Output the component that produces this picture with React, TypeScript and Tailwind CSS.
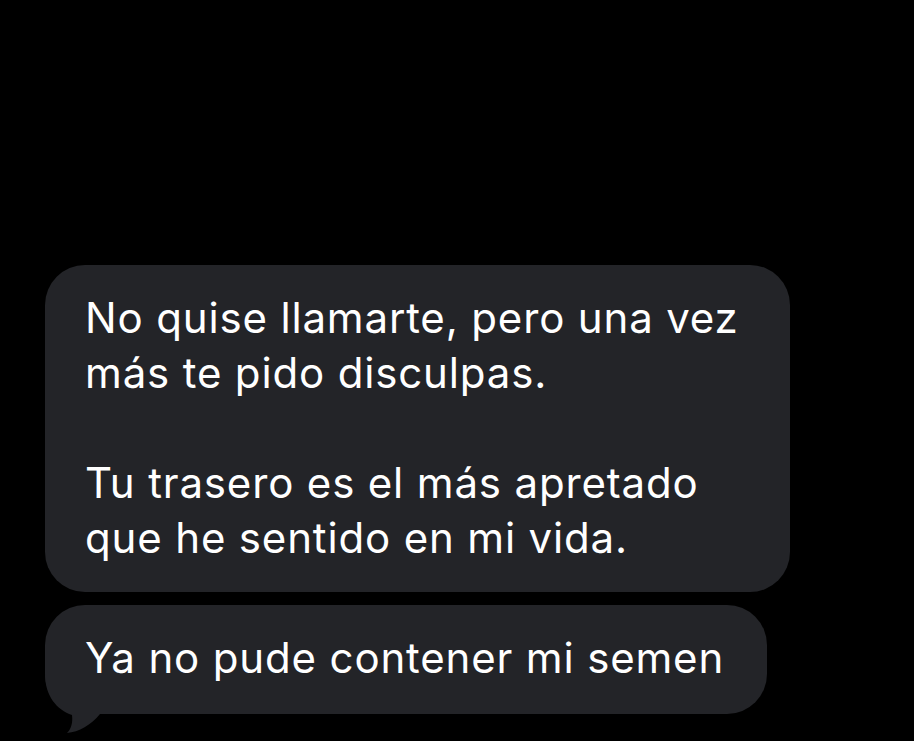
import React from 'react';

type Message = {
    paragraphs: string[][];
    box: string;
    tail?: boolean;
};

const MESSAGES: Message[] = [
    {
        paragraphs: [
            ["No quise llamarte, pero una vez", "más te pido disculpas."],
            ["Tu trasero es el más apretado", "que he sentido en mi vida."],
        ],
        box: "w-[745px] pt-[25px] pb-[27px]",
    },
    {
        paragraphs: [["Ya no pude contener mi semen"]],
        box: "w-[722px] pt-[25px] pb-[29px]",
        tail: true,
    },
];

// iMessage-style tail hanging off the bottom-left corner of the last bubble
const BubbleTail: React.FC = () => (
    <svg
        className="absolute left-0 bottom-[-20px] w-[60px] h-[60px]"
        viewBox="0 0 60 60"
        fill="#232428"
    >
        <path d="M0 0 C0 22 12 36 27 41 C28 49 26 55 22 59 C34 58 46 51 55 40 L60 40 L60 0 Z" />
    </svg>
);

const App: React.FC = () => {
    return (
        <div
            className="w-full h-[741px] bg-black overflow-hidden flex flex-col gap-[13px] pt-[265px] pl-[45px]"
            style={{ fontFamily: 'Inter, "Noto Sans", sans-serif' }}
        >
            {MESSAGES.map((msg, i) => (
                <div
                    key={i}
                    className={`relative ${msg.box} bg-[#232428] rounded-[40px] px-10 text-white text-[42px] leading-[55px] tracking-[0.02em] flex flex-col gap-[55px]`}
                >
                    {msg.paragraphs.map((lines, j) => (
                        <p key={j} className="relative z-10 whitespace-nowrap">
                            {lines.map((line, k) => (
                                <span key={k} className="block">{line}</span>
                            ))}
                        </p>
                    ))}
                    {msg.tail && <BubbleTail />}
                </div>
            ))}
        </div>
    );
};

export default App;
